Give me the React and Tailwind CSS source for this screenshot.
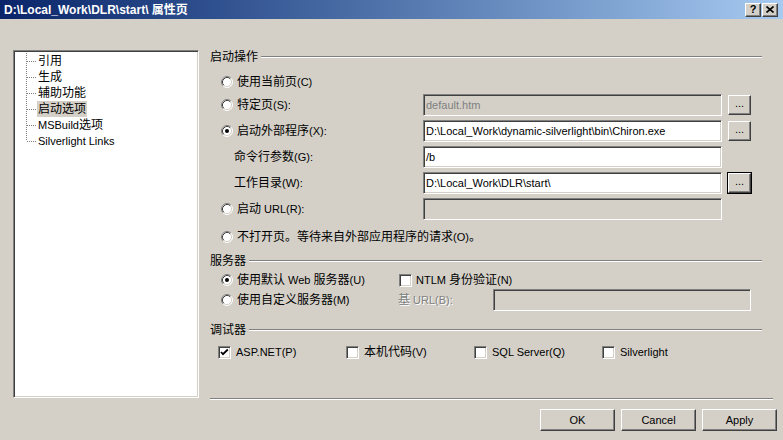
import React from "react";

// CJK runs render at 12px (SimSun-sized), latin at 11px (Tahoma-sized)
function T({ children }) {
  const parts = String(children).split(/([\u3000-\u303f\u4e00-\u9fff\uff00-\uffef]+)/);
  return parts.map((p, i) =>
    i % 2 ? (
      <span key={i} className="text-[12px]">
        {p}
      </span>
    ) : (
      p
    )
  );
}

const sunken =
  "border border-t-[#808080] border-l-[#808080] border-r-white border-b-white shadow-[inset_1px_1px_0_#404040,inset_-1px_-1px_0_#d4d0c8]";
const raised =
  "border border-t-white border-l-white border-r-[#404040] border-b-[#404040] shadow-[inset_-1px_-1px_0_#808080,inset_1px_1px_0_#d4d0c8]";

function Radio({ checked }) {
  return (
    <svg width="12" height="12" viewBox="0 0 12 12" className="shrink-0">
      <circle cx="6" cy="6" r="5" fill="white" />
      <path d="M2.11 9.89A5.5 5.5 0 0 1 9.89 2.11" stroke="#808080" fill="none" />
      <path d="M9.89 2.11A5.5 5.5 0 0 1 2.11 9.89" stroke="#ffffff" fill="none" />
      <path d="M2.82 9.18A4.5 4.5 0 0 1 9.18 2.82" stroke="#404040" fill="none" />
      <path d="M9.18 2.82A4.5 4.5 0 0 1 2.82 9.18" stroke="#d4d0c8" fill="none" />
      {checked && <circle cx="6" cy="6" r="2" fill="black" />}
    </svg>
  );
}

function Check({ checked }) {
  return (
    <span className={`w-[13px] h-[13px] shrink-0 bg-white flex items-center justify-center ${sunken}`}>
      {checked && (
        <svg width="9" height="9" viewBox="0 0 9 9">
          <path d="M1 4l2 2.2L7.8 1.5" stroke="black" strokeWidth="1.8" fill="none" />
        </svg>
      )}
    </span>
  );
}

function Field({ value, disabled, width = "w-[299px]" }) {
  return (
    <div
      className={`${width} h-[22px] flex items-center pl-[2px] ${sunken} ${
        disabled ? "bg-[#d4d0c8] text-[#808080]" : "bg-white text-black"
      }`}
    >
      {value}
    </div>
  );
}

function Dots({ focus }) {
  return (
    <div
      className={`ml-[6px] w-[23px] h-[20px] flex items-center justify-center text-[11px] pb-[3px] ${raised} ${
        focus ? "outline outline-1 outline-black" : ""
      }`}
    >
      ...
    </div>
  );
}

function Group({ label, className = "" }) {
  return (
    <div className={`flex items-center h-[14px] mr-[15px] ${className}`}>
      <span className="leading-none">
        <T>{label}</T>
      </span>
      <div className="flex-1 ml-[3px] h-[2px] border-t border-t-[#808080] border-b border-b-white" />
    </div>
  );
}

function TreeItem({ label, last, selected }) {
  return (
    <div className="flex items-center h-4">
      <svg width="11" height="16" viewBox="0 0 11 16" className="shrink-0">
        <line x1="0.5" y1="0" x2="0.5" y2={last ? 8 : 16} stroke="#808080" strokeDasharray="1 1" />
        <line x1="1" y1="8.5" x2="10" y2="8.5" stroke="#808080" strokeDasharray="1 1" />
      </svg>
      <span className={`px-[1px] h-4 flex items-center ${selected ? "bg-[#d4d0c8]" : ""}`}>
        <T>{label}</T>
      </span>
    </div>
  );
}

export default function App() {
  const tree = ["引用", "生成", "辅助功能", "启动选项", "MSBuild 选项", "Silverlight Links"];

  return (
    <div className="w-[783px] h-[440px] overflow-hidden bg-[#d4d0c8] text-black text-[11px] leading-none font-['Liberation_Sans','Noto_Sans_CJK_SC',sans-serif]">
      {/* ===== TITLE BAR ===== */}
      <div className="h-[19px] flex items-center pl-[4px] pr-[5px] bg-gradient-to-r from-[#0a246a] to-[#a6caf0]">
        <span className="flex-1 text-white font-bold text-[12px]">D:\Local_Work\DLR\start\ 属性页</span>
        <div className={`w-[16px] h-[14px] bg-[#d4d0c8] flex items-center justify-center font-bold text-[11px] ${raised}`}>
          ?
        </div>
        <div className={`w-[16px] h-[14px] ml-[1px] bg-[#d4d0c8] flex items-center justify-center ${raised}`}>
          <svg width="8" height="7" viewBox="0 0 8 7">
            <path d="M0.5 0.5l7 6M7.5 0.5l-7 6" stroke="black" strokeWidth="1.6" />
          </svg>
        </div>
      </div>

      {/* ===== BODY ===== */}
      <div className="flex pt-[31px] pl-[13px]">
        {/* tree */}
        <div className={`w-[186px] h-[348px] bg-white pl-[12px] pt-[2px] ${sunken}`}>
          {tree.map((t, i) => (
            <TreeItem key={t} label={t} last={i === tree.length - 1} selected={t === "启动选项"} />
          ))}
        </div>

        {/* settings */}
        <div className="ml-[11px] w-[567px] flex flex-col">
          <Group label="启动操作" />

          <div className="mt-[10px] h-4 flex items-center pl-[11px]">
            <Radio />
            <span className="ml-[4px]">
              <T>使用当前页(C)</T>
            </span>
          </div>

          <div className="mt-[4px] h-[22px] flex items-center">
            <div className="w-[213px] flex items-center pl-[11px]">
              <Radio />
              <span className="ml-[4px]">
                <T>特定页(S):</T>
              </span>
            </div>
            <Field value="default.htm" disabled />
            <Dots />
          </div>

          <div className="mt-[4px] h-[22px] flex items-center">
            <div className="w-[213px] flex items-center pl-[11px]">
              <Radio checked />
              <span className="ml-[4px]">
                <T>启动外部程序(X):</T>
              </span>
            </div>
            <Field value="D:\Local_Work\dynamic-silverlight\bin\Chiron.exe" />
            <Dots />
          </div>

          <div className="mt-[4px] h-[22px] flex items-center">
            <div className="w-[213px] pl-[24px]">
              <T>命令行参数(G):</T>
            </div>
            <Field value="/b" />
          </div>

          <div className="mt-[4px] h-[22px] flex items-center">
            <div className="w-[213px] pl-[24px]">
              <T>工作目录(W):</T>
            </div>
            <Field value="D:\Local_Work\DLR\start\" />
            <Dots focus />
          </div>

          <div className="mt-[4px] h-[22px] flex items-center">
            <div className="w-[213px] flex items-center pl-[11px]">
              <Radio />
              <span className="ml-[4px]">
                <T>启动 URL(R):</T>
              </span>
            </div>
            <Field value="" disabled />
          </div>

          <div className="mt-[9px] h-4 flex items-center pl-[11px]">
            <Radio />
            <span className="ml-[4px]">
              <T>不打开页。等待来自外部应用程序的请求(O)。</T>
            </span>
          </div>

          <Group label="服务器" className="mt-[9px]" />

          <div className="mt-[4px] h-4 flex items-center">
            <div className="w-[189px] flex items-center pl-[11px]">
              <Radio checked />
              <span className="ml-[4px]">
                <T>使用默认 Web 服务器(U)</T>
              </span>
            </div>
            <Check />
            <span className="ml-[4px]">
              <T>NTLM 身份验证(N)</T>
            </span>
          </div>

          <div className="mt-[1px] h-[22px] flex items-center">
            <div className="w-[188px] flex items-center pl-[11px]">
              <Radio />
              <span className="ml-[4px]">
                <T>使用自定义服务器(M)</T>
              </span>
            </div>
            <span className="w-[95px] text-[#808080] [text-shadow:1px_1px_0_#fff]">
              <T>基 URL(B):</T>
            </span>
            <Field value="" disabled width="w-[258px]" />
          </div>

          <Group label="调试器" className="mt-[12px]" />

          <div className="mt-[7px] h-4 flex items-center">
            {[
              ["ASP.NET(P)", true],
              ["本机代码(V)", false],
              ["SQL Server(Q)", false],
              ["Silverlight", false],
            ].map(([label, on]) => (
              <div key={label} className="w-[128px] pl-[8px] flex items-center">
                <Check checked={on} />
                <span className="ml-[5px]">
                  <T>{label}</T>
                </span>
              </div>
            ))}
          </div>

          <div className="mt-[38px] mr-[4px] h-[2px] border-t border-t-[#808080] border-b border-b-white" />

          <div className="mt-[9px] flex justify-end gap-[6px]">
            {["OK", "Cancel", "Apply"].map((b) => (
              <div key={b} className={`w-[75px] h-[22px] flex items-center justify-center ${raised}`}>
                {b}
              </div>
            ))}
          </div>
        </div>
      </div>
    </div>
  );
}
